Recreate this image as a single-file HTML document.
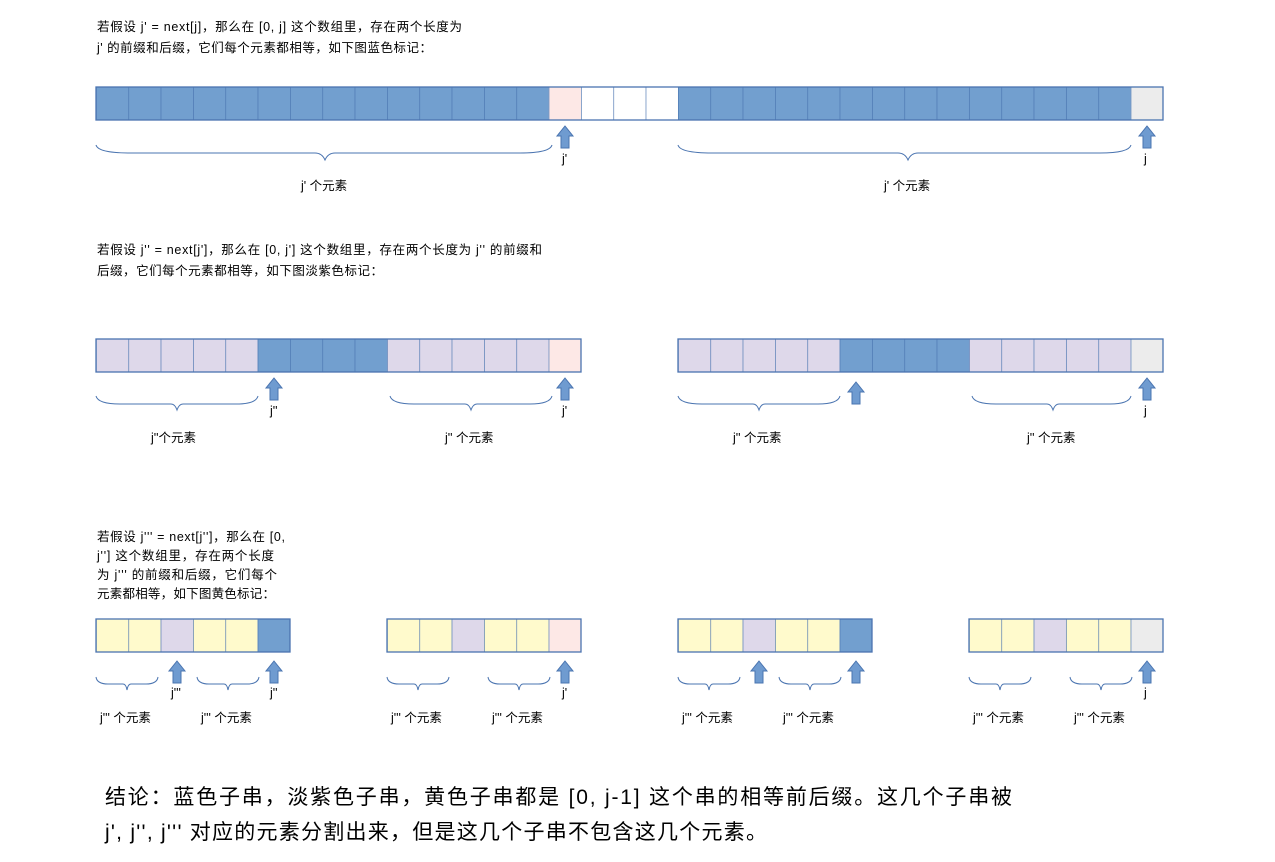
<!DOCTYPE html>
<html><head><meta charset="utf-8"><style>
html,body{margin:0;padding:0;background:#fff;width:1275px;height:862px;overflow:hidden}
svg{display:block}
text{font-family:"Liberation Sans","Noto Sans CJK SC",sans-serif;fill:#000}
.s{font-size:12.5px}
.b{font-size:21px}
</style></head><body>
<svg width="1275" height="862" viewBox="0 0 1275 862" xmlns="http://www.w3.org/2000/svg">
<defs>
<pattern id="g" x="96" y="0" width="32.333" height="900" patternUnits="userSpaceOnUse">
<line x1="0" y1="0" x2="0" y2="900" stroke="#4a74b0" stroke-width="1.3"/>
</pattern>
<path id="ar" d="M0 0 L8 10 L4 10 L4 22 L-4 22 L-4 10 L-8 10 Z" fill="#6f9bd0" stroke="#4a74b0" stroke-width="1"/>
</defs>

<text class="s" x="97" y="31" textLength="365" lengthAdjust="spacing">若假设 j' = next[j]，那么在 [0, j] 这个数组里，存在两个长度为</text>
<text class="s" x="97" y="52" textLength="335" lengthAdjust="spacing">j' 的前缀和后缀，它们每个元素都相等，如下图蓝色标记：</text>

<!-- row 1 -->
<g stroke="none">
<rect x="96" y="87" width="452.7" height="33" fill="#729fcf"/>
<rect x="548.7" y="87" width="32.33" height="33" fill="#fde8e6"/>
<rect x="581" y="87" width="97" height="33" fill="#fff"/>
<rect x="678" y="87" width="452.7" height="33" fill="#729fcf"/>
<rect x="1130.7" y="87" width="32.33" height="33" fill="#ececec"/>
</g>
<rect x="96" y="87" width="1067" height="33" fill="url(#g)"/>
<rect x="96" y="87" width="1067" height="33" fill="none" stroke="#4a74b0" stroke-width="1.3"/>
<use href="#ar" x="565" y="126"/>
<use href="#ar" x="1147" y="126"/>
<text class="s" x="562" y="163">j'</text>
<text class="s" x="1144" y="163">j</text>
<path d="M96 145 Q98 153 130 153 L315 153 Q322 153 325 160 Q328 153 335 153 L520 153 Q550 153 552 145" fill="none" stroke="#4a74b0" stroke-width="1"/>
<path d="M678 145 Q680 153 712 153 L898 153 Q905 153 908 160 Q911 153 918 153 L1100 153 Q1129 153 1131 145" fill="none" stroke="#4a74b0" stroke-width="1"/>
<text class="s" x="301" y="190">j' 个元素</text>
<text class="s" x="884" y="190">j' 个元素</text>

<text class="s" x="97" y="254" textLength="445" lengthAdjust="spacing">若假设 j'' = next[j']，那么在 [0, j'] 这个数组里，存在两个长度为 j'' 的前缀和</text>
<text class="s" x="97" y="275" textLength="286" lengthAdjust="spacing">后缀，它们每个元素都相等，如下图淡紫色标记：</text>

<!-- row 2 -->
<g>
<rect x="96" y="339" width="161.7" height="33" fill="#ded8ea"/>
<rect x="257.7" y="339" width="129.3" height="33" fill="#729fcf"/>
<rect x="387" y="339" width="161.7" height="33" fill="#ded8ea"/>
<rect x="548.7" y="339" width="32.33" height="33" fill="#fde8e6"/>
<rect x="678" y="339" width="161.7" height="33" fill="#ded8ea"/>
<rect x="839.7" y="339" width="129.3" height="33" fill="#729fcf"/>
<rect x="969" y="339" width="161.7" height="33" fill="#ded8ea"/>
<rect x="1130.7" y="339" width="32.33" height="33" fill="#ececec"/>
</g>
<rect x="96" y="339" width="485" height="33" fill="url(#g)"/>
<rect x="678" y="339" width="485" height="33" fill="url(#g)"/>
<rect x="96" y="339" width="485" height="33" fill="none" stroke="#4a74b0" stroke-width="1.3"/>
<rect x="678" y="339" width="485" height="33" fill="none" stroke="#4a74b0" stroke-width="1.3"/>
<use href="#ar" x="274" y="378"/>
<use href="#ar" x="565" y="378"/>
<use href="#ar" x="856" y="382"/>
<use href="#ar" x="1147" y="378"/>
<text class="s" x="270" y="415">j''</text>
<text class="s" x="562" y="415">j'</text>
<text class="s" x="1144" y="415">j</text>
<g fill="none" stroke="#4a74b0" stroke-width="1">
<path d="M96 396 Q98 404 120 404 L171 404 Q175 404 177 410 Q179 404 183 404 L236 404 Q256 404 258 396"/>
<path d="M390 396 Q392 404 414 404 L465 404 Q469 404 471 410 Q473 404 477 404 L530 404 Q550 404 552 396"/>
<path d="M678 396 Q680 404 702 404 L753 404 Q757 404 759 410 Q761 404 765 404 L818 404 Q838 404 840 396"/>
<path d="M972 396 Q974 404 996 404 L1047 404 Q1051 404 1053 410 Q1055 404 1059 404 L1110 404 Q1129 404 1131 396"/>
</g>
<text class="s" x="151" y="442">j''个元素</text>
<text class="s" x="445" y="442">j'' 个元素</text>
<text class="s" x="733" y="442">j'' 个元素</text>
<text class="s" x="1027" y="442">j'' 个元素</text>

<text class="s" x="97" y="541" textLength="188" lengthAdjust="spacing">若假设 j''' = next[j'']，那么在 [0,</text>
<text class="s" x="97" y="560" textLength="177" lengthAdjust="spacing">j''] 这个数组里，存在两个长度</text>
<text class="s" x="97" y="579" textLength="180" lengthAdjust="spacing">为 j''' 的前缀和后缀，它们每个</text>
<text class="s" x="97" y="598" textLength="178" lengthAdjust="spacing">元素都相等，如下图黄色标记：</text>

<!-- row 3 -->
<g>
<rect x="96" y="619" width="64.7" height="33" fill="#fffacc"/>
<rect x="160.7" y="619" width="32.33" height="33" fill="#ded8ea"/>
<rect x="193" y="619" width="64.7" height="33" fill="#fffacc"/>
<rect x="257.7" y="619" width="32.33" height="33" fill="#729fcf"/>
<rect x="387" y="619" width="64.7" height="33" fill="#fffacc"/>
<rect x="451.7" y="619" width="32.33" height="33" fill="#ded8ea"/>
<rect x="484" y="619" width="64.7" height="33" fill="#fffacc"/>
<rect x="548.7" y="619" width="32.33" height="33" fill="#fde8e6"/>
<rect x="678" y="619" width="64.7" height="33" fill="#fffacc"/>
<rect x="742.7" y="619" width="32.33" height="33" fill="#ded8ea"/>
<rect x="775" y="619" width="64.7" height="33" fill="#fffacc"/>
<rect x="839.7" y="619" width="32.33" height="33" fill="#729fcf"/>
<rect x="969" y="619" width="64.7" height="33" fill="#fffacc"/>
<rect x="1033.7" y="619" width="32.33" height="33" fill="#ded8ea"/>
<rect x="1066" y="619" width="64.7" height="33" fill="#fffacc"/>
<rect x="1130.7" y="619" width="32.33" height="33" fill="#ececec"/>
</g>
<g>
<rect x="96" y="619" width="194" height="33" fill="url(#g)"/>
<rect x="387" y="619" width="194" height="33" fill="url(#g)"/>
<rect x="678" y="619" width="194" height="33" fill="url(#g)"/>
<rect x="969" y="619" width="194" height="33" fill="url(#g)"/>
</g>
<g fill="none" stroke="#4a74b0" stroke-width="1.3">
<rect x="96" y="619" width="194" height="33"/>
<rect x="387" y="619" width="194" height="33"/>
<rect x="678" y="619" width="194" height="33"/>
<rect x="969" y="619" width="194" height="33"/>
</g>
<use href="#ar" x="177" y="661"/>
<use href="#ar" x="274" y="661"/>
<use href="#ar" x="565" y="661"/>
<use href="#ar" x="759" y="661"/>
<use href="#ar" x="856" y="661"/>
<use href="#ar" x="1147" y="661"/>
<text class="s" x="171" y="697">j'''</text>
<text class="s" x="270" y="697">j''</text>
<text class="s" x="562" y="697">j'</text>
<text class="s" x="1144" y="697">j</text>
<g fill="none" stroke="#4a74b0" stroke-width="1">
<path d="M96 677 Q97 684 108 684 L123 684 Q126 684 127 690 Q128 684 131 684 L146 684 Q157 684 158 677"/>
<path d="M197 677 Q198 684 209 684 L224 684 Q227 684 228 690 Q229 684 232 684 L247 684 Q258 684 259 677"/>
<path d="M387 677 Q388 684 399 684 L414 684 Q417 684 418 690 Q419 684 422 684 L437 684 Q448 684 449 677"/>
<path d="M488 677 Q489 684 500 684 L515 684 Q518 684 519 690 Q520 684 523 684 L538 684 Q549 684 550 677"/>
<path d="M678 677 Q679 684 690 684 L705 684 Q708 684 709 690 Q710 684 713 684 L728 684 Q739 684 740 677"/>
<path d="M779 677 Q780 684 791 684 L806 684 Q809 684 810 690 Q811 684 814 684 L829 684 Q840 684 841 677"/>
<path d="M969 677 Q970 684 981 684 L996 684 Q999 684 1000 690 Q1001 684 1004 684 L1019 684 Q1030 684 1031 677"/>
<path d="M1070 677 Q1071 684 1082 684 L1097 684 Q1100 684 1101 690 Q1102 684 1105 684 L1120 684 Q1131 684 1132 677"/>
</g>
<text class="s" x="100" y="722">j''' 个元素</text>
<text class="s" x="201" y="722">j''' 个元素</text>
<text class="s" x="391" y="722">j''' 个元素</text>
<text class="s" x="492" y="722">j''' 个元素</text>
<text class="s" x="682" y="722">j''' 个元素</text>
<text class="s" x="783" y="722">j''' 个元素</text>
<text class="s" x="973" y="722">j''' 个元素</text>
<text class="s" x="1074" y="722">j''' 个元素</text>

<text class="b" x="105" y="804" textLength="907" lengthAdjust="spacing">结论：蓝色子串，淡紫色子串，黄色子串都是 [0, j-1] 这个串的相等前后缀。这几个子串被</text>
<text class="b" x="105" y="839" textLength="662" lengthAdjust="spacing">j', j'', j''' 对应的元素分割出来，但是这几个子串不包含这几个元素。</text>
</svg>
</body></html>
